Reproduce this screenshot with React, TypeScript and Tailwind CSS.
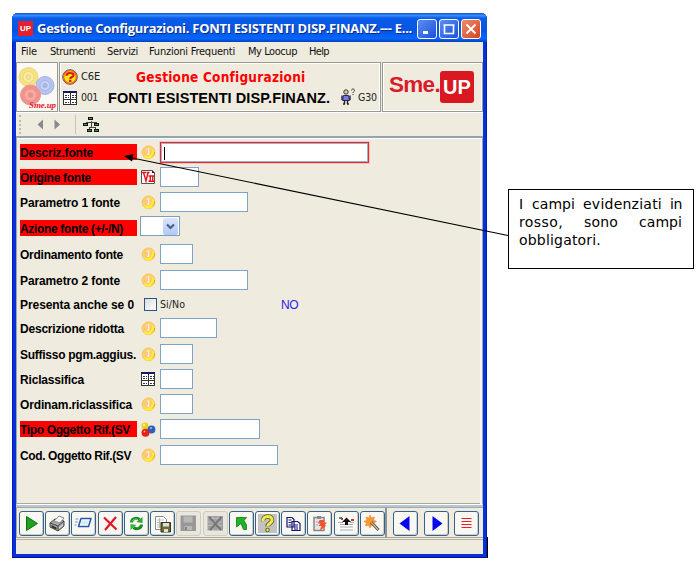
import { useLayoutEffect, useRef, useState, type ReactNode } from "react";

/* One line of text whose tracking is adjusted so that it spans `w` pixels. */
function Fit({ w, className = "", children }: { w: number; className?: string; children: string }) {
  const ref = useRef<HTMLSpanElement>(null);
  const [spacing, setSpacing] = useState(0);
  useLayoutEffect(() => {
    if (ref.current) {
      const natural = ref.current.getBoundingClientRect().width;
      setSpacing((w - natural) / children.length);
    }
  }, [w, children]);
  return (
    <span ref={ref} className={`inline-block shrink-0 whitespace-pre ${className}`} style={{ letterSpacing: spacing }}>
      {children}
    </span>
  );
}

const TAHOMA = "font-['DejaVu_Sans_Condensed','DejaVu_Sans',sans-serif]";
const ARIAL = "font-['Liberation_Sans',Arial,sans-serif]";

function ClockIcon() {
  return (
    <svg width="15" height="15" viewBox="0 0 15 15">
      <circle cx="7.5" cy="7.3" r="6.4" fill="#ffe04a" stroke="#f8b955" strokeWidth=".8" />
      <path d="M3 11.500A6 6 0 0 0 13.500 7L11 5 9 10z" fill="#fff02e" />
      <circle cx="6.500" cy="6.500" r="4.600" fill="#ffc877" />
      <path d="M5.700 4h2v5.200H6" fill="none" stroke="#fff8e0" strokeWidth="1.200" />
      <path d="M11 11.500A6 6 0 0 0 13.700 7" fill="none" stroke="#f39a3a" strokeWidth="1" />
    </svg>
  );
}

function TableIcon() {
  return (
    <svg width="14" height="14" viewBox="0 0 14 14" shapeRendering="crispEdges">
      <rect width="14" height="14" fill="#333" />
      <rect width="14" height="2" fill="#18185e" />
      <rect x="1" y="2" width="6" height="6" fill="#fff" />
      <rect x="8" y="2" width="5" height="6" fill="#fff" />
      <rect x="1" y="9" width="6" height="4" fill="#fff" />
      <rect x="8" y="9" width="5" height="4" fill="#fff" />
      <path d="M2 4.500h2M5 4.500h1M9 4.500h2M12 4.500h1M2 6.500h2M5 6.500h1M9 6.500h2M12 6.500h1M2 11.500h2M5 11.500h1M9 11.500h2M12 11.500h1" stroke="#333" />
    </svg>
  );
}

function VIcon() {
  return (
    <svg width="14" height="14" viewBox="0 0 14 14">
      <path d="M.5.5h10.500L13.500 3v10.500H.5z" fill="#fff" stroke="#555" />
      <path d="M11 0v3h3z" fill="#222" />
      <path d="M1 2.500h4M2.500 2.500l2.500 8.500 2-8.500M5.500 2.500h3M7.500 6h6M7.500 11.200h6M9.300 6v5M11.800 6v5" fill="none" stroke="#e3121b" strokeWidth="1.400" />
    </svg>
  );
}

function BallsIcon() {
  return (
    <svg width="15" height="15" viewBox="0 0 15 15">
      <circle cx="4" cy="4" r="3.500" fill="#e8d21e" />
      <circle cx="10.500" cy="7.500" r="3.900" fill="#2c5fc0" />
      <circle cx="4.500" cy="10.800" r="4" fill="#e02418" />
      <circle cx="3" cy="3" r="1" fill="#fff6a0" />
      <circle cx="10" cy="6" r="1" fill="#9dbcf0" />
      <circle cx="3.500" cy="9.500" r="1" fill="#ff9c8c" />
    </svg>
  );
}

function HelpIcon() {
  return (
    <svg width="16" height="16" viewBox="0 0 16 16">
      <circle cx="8" cy="8" r="7.300" fill="#ffe715" stroke="#2b2a6a" strokeWidth=".8" />
      <circle cx="8" cy="8" r="6.300" fill="none" stroke="#f0601c" strokeWidth="1.200" />
      <path d="M4.500 6.700C4.500 3.200 11.500 3.200 11.500 6.200 11.500 8.300 8.200 7.800 8.200 10" fill="none" stroke="#e3151b" strokeWidth="2.200" />
      <rect x="7" y="10.800" width="2.400" height="2.200" fill="#e3151b" />
    </svg>
  );
}

function PersonIcon() {
  return (
    <svg width="15" height="17" viewBox="0 0 15 17">
      <circle cx="5" cy="4" r="2.200" fill="#ded78b" stroke="#333" />
      <path d="M2.500 7.500h5l1 5h-7z" fill="#7779e8" stroke="#222a70" />
      <path d="M1 7.500v4.500M9 7.500v4.500M3.500 12v4M6.500 12v4M2 16h2M6 16h2" stroke="#222" strokeWidth="1.400" />
      <path d="M10.500 2.500c0-2 3-2 3 0 0 1-1.500 1-1.500 2.500M12 6v1" fill="none" stroke="#333" strokeWidth="1" />
    </svg>
  );
}

function Rings() {
  return (
    <svg width="40" height="48" viewBox="0 0 40 48">
      <rect width="40" height="48" fill="#fbf9f6" />
      <g fill="#f8e27c" stroke="#ead58a">
        <circle cx="11.500" cy="14" r="9.500" />
        <circle cx="11.500" cy="14" r="5.500" fill="#fbeca4" />
        <circle cx="11.500" cy="14" r="2.500" fill="#f4e294" />
      </g>
      <g fill="#b6c3f2" stroke="#a5b3e5">
        <circle cx="28" cy="22.500" r="9" />
        <circle cx="28" cy="22.500" r="5" fill="#cbd5f8" />
        <circle cx="28" cy="22.500" r="2.300" fill="#a9b8ea" />
      </g>
      <g fill="#f2938b" stroke="#e99790">
        <circle cx="13.500" cy="32" r="10" />
        <circle cx="13.500" cy="32" r="6" fill="#f6aca5" />
        <circle cx="13.500" cy="32" r="2.500" fill="#ea8f88" />
      </g>
    </svg>
  );
}

type Row = {
  label: string;
  tw: number;
  gap: string;
  red?: boolean;
  icon?: ReactNode;
  field: string;
};

const rows: Row[] = [
  { label: "Descriz.fonte", tw: 73, gap: "mt-0", red: true, field: "w-[209px] first" },
  { label: "Origine fonte", tw: 71, gap: "mt-[5px]", red: true, icon: <VIcon />, field: "w-[39px]" },
  { label: "Parametro 1 fonte", tw: 100, gap: "mt-[5px]", field: "w-[88px]" },
  { label: "Azione fonte (+/-/N)", tw: 103, gap: "mt-[6px]", red: true, field: "combo" },
  { label: "Ordinamento fonte", tw: 103, gap: "mt-[6px]", field: "w-[33px]" },
  { label: "Parametro 2 fonte", tw: 100, gap: "mt-[6px]", field: "w-[88px]" },
  { label: "Presenta anche se 0", tw: 114, gap: "mt-[4px]", field: "check" },
  { label: "Descrizione ridotta", tw: 104, gap: "mt-[4px]", field: "w-[57px]" },
  { label: "Suffisso pgm.aggius.", tw: 116, gap: "mt-[6px]", field: "w-[33px]" },
  { label: "Riclassifica", tw: 64, gap: "mt-[5px]", icon: <TableIcon />, field: "w-[33px]" },
  { label: "Ordinam.riclassifica", tw: 112, gap: "mt-[5px]", field: "w-[33px]" },
  { label: "Tipo Oggetto Rif.(SV", tw: 110, gap: "mt-[5px]", red: true, icon: <BallsIcon />, field: "w-[100px]" },
  { label: "Cod. Oggetto Rif.(SV", tw: 111, gap: "mt-[6px]", field: "w-[118px]" },
];

function Combo() {
  return (
    <div className="-mt-[2px] ml-[3px] flex h-[20px] w-[40px] items-center justify-end self-start border border-[#7f9db9] bg-white pr-px">
      <div className="flex h-[17px] w-[15px] items-center justify-center rounded-[2px] bg-linear-to-b from-[#dbe5fd] to-[#b1c8f5]">
        <svg width="9" height="7" viewBox="0 0 9 7">
          <path d="M1 1.500l3.500 3.500L8 1.500" fill="none" stroke="#4d6185" strokeWidth="2.200" />
        </svg>
      </div>
    </div>
  );
}

function FormRow({ row }: { row: Row }) {
  return (
    <div className={`flex h-[20px] items-center ${row.gap}`}>
      <div className={`flex h-[16px] w-[117px] items-center pt-px text-[12px] leading-[16px] font-bold text-black ${ARIAL} ${row.red ? "bg-[#ff0000]" : ""}`}>
        <Fit w={row.tw}>{row.label}</Fit>
      </div>
      {row.field === "combo" && <Combo />}
      {row.field === "check" && (
        <>
          <div className="ml-[7px] size-[13px] border border-[#28568c] bg-linear-to-br from-[#dcdcd7] to-white" />
          <Fit w={25} className={`ml-[3px] pt-px text-[10.500px] text-[#222] ${TAHOMA}`}>Si/No</Fit>
          <Fit w={17} className={`ml-[96px] pt-px text-[12px] text-[#2a22ee] ${ARIAL}`}>NO</Fit>
        </>
      )}
      {row.field.startsWith("w-") && (
        <>
          <div className="ml-[3px] flex w-[20px] items-center pl-px">{row.icon ?? <ClockIcon />}</div>
          {row.field.endsWith("first") ? (
            <div className="h-[21px] w-[209px] border border-[#e8262e] bg-white outline outline-[#f4a4a4]/50">
              <div className="h-full border border-[#9fb4c8] pt-[3px] pl-[2px]">
                <div className="h-[13px] w-px bg-black" />
              </div>
            </div>
          ) : (
            <div className={`h-[20px] border border-[#7fa3c4] bg-white ${row.field}`} />
          )}
        </>
      )}
    </div>
  );
}

function ToolButton({ children, disabled = false }: { children: ReactNode; disabled?: boolean }) {
  return (
    <div
      className={`flex h-[25px] w-[25px] shrink-0 items-center justify-center rounded-[3px] border ${
        disabled ? "border-[#cfccbe] bg-[#e9e7dd]" : "border-[#33628f] bg-[#f8f7f2] shadow-[inset_-1px_-1px_0_#cfccc2]"
      }`}
    >
      <svg width="19" height="19" viewBox="0 0 19 19">
        {children}
      </svg>
    </div>
  );
}

const tools: { off?: boolean; art: ReactNode }[] = [
  { art: <path d="M4.500 2.500L15.500 9.500 4.500 16.500z" fill="#20a020" stroke="#087508" /> },
  {
    art: (
      <>
        <path d="M2 9l5-4 9 2v5l-6 5-8-4z" fill="#aaa" stroke="#444" />
        <path d="M2 9l8 3 6-5M10 12v5" fill="none" stroke="#444" />
        <path d="M6 7l5-5 5 2-4 5z" fill="#f4f4f4" stroke="#888" />
        <path d="M3.500 11l5 2.500v2l-5-2z" fill="#333" />
        <path d="M11 14l4-3" stroke="#eee" />
      </>
    ),
  },
  {
    art: (
      <>
        <path d="M7 4.500h10l-2.500 8H4.500z" fill="#fff" stroke="#2459aa" strokeWidth="1.500" strokeLinejoin="round" />
        <path d="M8 6.500h7l-1.500 4h-7z" fill="#d9e8ff" />
        <path d="M1.500 5h3M1 8h3M.5 11h2" stroke="#5c9cdb" />
      </>
    ),
  },
  { art: <path d="M3 3.500l12.500 12M15 3L4 16" stroke="#df1825" strokeWidth="2.200" fill="none" /> },
  {
    art: (
      <>
        <path d="M4.500 8.500c0-4 5-5.500 8-3" fill="none" stroke="#178a22" strokeWidth="3" />
        <path d="M15.500 3v6l-6-1z" fill="#27a632" />
        <path d="M14.500 10.500c0 4-5 5.500-8 3" fill="none" stroke="#178a22" strokeWidth="3" />
        <path d="M3.500 16v-6l6 1z" fill="#35b53c" />
        <path d="M5 7.500C6 5 9 4.500 11 6" fill="none" stroke="#8be080" />
      </>
    ),
  },
  {
    art: (
      <>
        <path d="M2.500 2.500h8l3 3v10h-11z" fill="#fff" stroke="#8a8a8a" />
        <path d="M4 6h7M4 8.500h7M4 11h5M4 13h4M6.500 4v10" stroke="#b4bfb4" />
        <path d="M8 8.500h9.500V18H8z" fill="#6b6b2e" stroke="#34341a" />
        <path d="M10 9h6v3.500h-6zM11 15h4v3h-4z" fill="#ddd" />
      </>
    ),
  },
  {
    off: true,
    art: (
      <>
        <path d="M1.500 1.500h15.500v15.500H1.500z" fill="#989898" />
        <path d="M4.500 2.500h9v6h-9zM5.500 12h7.500v4H5.500z" fill="#b8b8b8" />
        <path d="M6 13h2v3H6z" fill="#858585" />
      </>
    ),
  },
  {
    off: true,
    art: (
      <>
        <path d="M1.500 2h15.500v14.500H1.500z" fill="#a0a0a0" />
        <path d="M2 4.500h14M2 8h14M2 11.500h14M7 2v14M12 2v14" stroke="#b9b9b9" />
        <path d="M3 3l12 13M15.500 3L4 16" stroke="#777" strokeWidth="2" />
      </>
    ),
  },
  { art: <path d="M4.500 13V3.500H14.500L12 6.500l2.500 4.500v4.500h-3L9 9.500z" fill="#22b322" stroke="#16701c" strokeWidth=".8" /> },
  {
    art: (
      <>
        <rect width="19" height="19" fill="#c2c2c2" />
        <path d="M5 7C4.500 1 15 1 14 6.500c-.5 3-4.500 3-4.500 6" fill="none" stroke="#5c5920" strokeWidth="4.500" />
        <path d="M5 7C4.500 1 15 1 14 6.500c-.5 3-4.500 3-4.500 6" fill="none" stroke="#f3e94d" strokeWidth="3" />
        <circle cx="9.500" cy="16" r="1.800" fill="#f3e94d" stroke="#5c5920" />
      </>
    ),
  },
  {
    art: (
      <>
        <path d="M3 3.500h5l2 2V13H3zM8 7.500h5.500l2.500 2v7H8z" fill="#fff" stroke="#11116e" strokeWidth="1.200" />
        <path d="M4.500 6h3M4.500 8.500h3M4.500 11h3M10 11h4M10 13h4M10 15h4" stroke="#11116e" />
      </>
    ),
  },
  {
    art: (
      <>
        <path d="M4 3.500h10v13H4z" fill="#e5e5e5" stroke="#888" strokeWidth="1.500" />
        <path d="M7 2h4v3H7z" fill="#888" />
        <path d="M9.500 6h5.500l-2 2.500h4l-2.500 3h2L9.500 17l2-5H8.500l2-2.500H8z" fill="#f5502d" />
        <path d="M6 8h2M6 11h2" stroke="#aaa" />
      </>
    ),
  },
  {
    art: (
      <>
        <path d="M1.500 3h15.500v14H1.500z" fill="#fff" />
        <path d="M1 8.500h5M13 8.500h4M3 10.500h5M11 10.500h5M3 13h13M3 16h13" stroke="#aaa" />
        <path d="M9.500 3.500L5 8h3v3h3V8h3z" fill="#111" />
        <path d="M2 3h3v2H2z" fill="#20a07a" />
        <path d="M14 5h3v2h-3zM4 4h2v2H4z" fill="#d42d2d" />
      </>
    ),
  },
  {
    art: (
      <>
        <path d="M7 1l1.500 3 3-1-1 3 3 1.500-3 1.500 1 3-3-1L7 14l-1.500-3-3 1 1-3L1 7.500 4 6 3 3l3 1z" fill="#ff9a28" stroke="#ed7324" strokeWidth=".5" />
        <path d="M8 8l7.500 8" stroke="#555" strokeWidth="3" />
        <path d="M8 8l7 7.500" stroke="#ccb78c" strokeWidth="1.300" />
      </>
    ),
  },
];

function HeaderPanel({ className, children }: { className: string; children: ReactNode }) {
  return (
    <div className={`h-[50px] shrink-0 border border-[#9b9a92] shadow-[inset_1px_1px_0_#fff,inset_-1px_-1px_0_#fff] ${className}`}>{children}</div>
  );
}

function TitleButton({ close = false, children }: { close?: boolean; children: ReactNode }) {
  return (
    <div
      className={`flex size-[20px] shrink-0 items-center justify-center rounded-[3px] border border-white ${
        close ? "bg-linear-to-br from-[#ee8a6a] to-[#d5401a]" : "bg-linear-to-br from-[#5c8df0] to-[#1f50d8]"
      }`}
    >
      <svg width="14" height="14" viewBox="0 0 14 14" fill="none" stroke="#fff">
        {children}
      </svg>
    </div>
  );
}

const menus: [string, number, string][] = [
  ["File", 16, "ml-[5px]"],
  ["Strumenti", 45, "ml-[13px]"],
  ["Servizi", 31, "ml-[12px]"],
  ["Funzioni Frequenti", 86, "ml-[11px]"],
  ["My Loocup", 49, "ml-[13px]"],
  ["Help", 20, "ml-[12px]"],
];

function AppWindow() {
  return (
    <div className="flex h-[545px] w-[475px] flex-col rounded-t-[6px] bg-[#0831d9] px-[4px] pb-[4px] shadow-[inset_1px_0_0_#0019cf,inset_-1px_0_0_#001eb0,inset_0_-1px_0_#00138c]">
      <div className="-mx-[4px] flex h-[29px] shrink-0 items-center rounded-t-[6px] bg-[linear-gradient(#0a4fd8_0%,#3a8ffb_8%,#0b5ce8_18%,#0355e3_60%,#0666fc_88%,#0340c0_100%)] pt-[2px] pr-[6px] pl-[6px]">
        <div className={`flex h-[15px] w-[15px] items-center justify-center bg-[#e3202c] text-[8px] leading-none font-bold text-white ${ARIAL}`}>UP</div>
        <Fit w={375} className="mr-auto ml-[4px] font-['Open_Sans','Noto_Sans',sans-serif] text-[13px] font-bold text-white [text-shadow:1px_1px_0_#0b2a84]">
          Gestione Configurazioni. FONTI ESISTENTI DISP.FINANZ.--- E...
        </Fit>
        <div className="flex gap-[2px]">
          <TitleButton><path d="M3 10.500h5" strokeWidth="3" /></TitleButton>
          <TitleButton><path d="M2.500 3v8.500h9V3M1.500 3h11" strokeWidth="1.600" /></TitleButton>
          <TitleButton close><path d="M2.500 2.500l9 9M11.500 2.500l-9 9" strokeWidth="2" /></TitleButton>
        </div>
      </div>

      <div className="flex min-h-0 flex-1 flex-col bg-[#efebde]">
        <div className={`flex h-[19px] shrink-0 items-center text-[11px] leading-[18px] text-[#111] ${TAHOMA}`}>
          {menus.map(([name, w, gap]) => (
            <Fit key={name} w={w} className={gap}>{name}</Fit>
          ))}
        </div>

        <div className="flex h-[51px] shrink-0 gap-px pt-px">
          <HeaderPanel className="w-[42px]">
            <div className="relative">
              <Rings />
              <span className="absolute top-[31px] left-[12px] leading-none">
                <Fit w={27} className="font-['Liberation_Serif',serif] text-[9px] leading-[11px] font-bold text-[#e8202a] italic">Sme.up</Fit>
              </span>
            </div>
          </HeaderPanel>
          <HeaderPanel className="flex w-[322px] flex-col pt-[4px] pl-[2px]">
            <div className="flex h-[20px] items-center">
              <HelpIcon />
              <Fit w={19} className={`ml-[3px] text-[11px] text-[#222] ${TAHOMA}`}>C6E</Fit>
              <Fit w={169} className={`ml-[36px] text-[13.500px] leading-[18px] font-bold text-[#ff0000] ${TAHOMA}`}>Gestione Configurazioni</Fit>
            </div>
            <div className="flex h-[22px] items-center">
              <div className="ml-px"><TableIcon /></div>
              <Fit w={17} className={`ml-[4px] text-[10.500px] text-[#222] ${TAHOMA}`}>001</Fit>
              <Fit w={222} className={`ml-[10px] text-[14.500px] leading-[20px] font-bold text-black ${ARIAL}`}>FONTI ESISTENTI DISP.FINANZ.</Fit>
              <div className="-mt-[4px] ml-[11px]"><PersonIcon /></div>
              <Fit w={19} className={`ml-[2px] text-[10.500px] text-[#222] ${TAHOMA}`}>G30</Fit>
            </div>
          </HeaderPanel>
          <HeaderPanel className="flex w-[101px] pt-[8px] pl-[6px]">
            <Fit w={51} className={`text-[22.500px] leading-[28px] font-bold text-[#d91c2a] ${ARIAL}`}>Sme.</Fit>
            <div className="flex h-[32px] w-[34px] items-center justify-center rounded-[3px] bg-[#d91822]">
              <Fit w={28} className={`text-[20px] leading-[24px] font-bold text-white ${ARIAL}`}>UP</Fit>
            </div>
          </HeaderPanel>
        </div>

        <div className="flex h-[24px] shrink-0 items-center border-t border-white">
          <div className="ml-[3px] h-[19px] border-l-2 border-dotted border-[#bcb9ad]" />
          <svg className="ml-[16px]" width="24" height="11" viewBox="0 0 24 11" fill="#858b8b">
            <path d="M6 .5v10L.5 5.500zM17.500.500v10L23 5.500z" />
          </svg>
          <div className="ml-[14px] h-[19px] w-px bg-[#c9c5b5]" />
          <svg className="ml-[7px]" width="17" height="16" viewBox="0 0 17 16" shapeRendering="crispEdges">
            <path d="M8.500 4v3M3.500 8V5.500h10V8M8.500 5v6M6 12v-1.500h6V12" fill="none" stroke="#444" />
            <g fill="#35a33a" stroke="#111">
              <rect x="5.500" y=".5" width="4" height="2" />
              <rect x=".5" y="6.500" width="4" height="2" />
              <rect x="11.500" y="6.500" width="4" height="2" />
              <rect x="4.500" y="12.500" width="4" height="2" />
              <rect x="11.500" y="12.500" width="4" height="2" />
            </g>
          </svg>
        </div>

        <div className="flex h-[369px] shrink-0 flex-col border border-t-2 border-[#9ba8ae] border-t-[#91a4b1] border-b-white pt-[4px] pl-[3px] shadow-[inset_0_1px_0_#fff,inset_-2px_0_0_#f8f6ed,inset_0_-1px_0_#aaa99f]">
          {rows.map((row) => (
            <FormRow key={row.label} row={row} />
          ))}
        </div>

        <div className="flex h-[33px] shrink-0 border-t-2 border-[#b3c8de]">
          <div className="flex w-[371px] items-center gap-[1.230px] border border-[#aaa79b] border-r-2 border-r-[#8f9398] pt-px pl-[2px]">
            {tools.map((t, i) => (
              <ToolButton key={i} disabled={t.off}>{t.art}</ToolButton>
            ))}
          </div>
          <div className="flex flex-1 items-center gap-[5.500px] border-y border-[#aaa79b] pt-px pl-[6px]">
            <ToolButton><path d="M13.500 2v15L3.500 9.500z" fill="#0505ef" /></ToolButton>
            <ToolButton><path d="M5.500 2v15l10-7.500z" fill="#0505ef" /></ToolButton>
            <ToolButton><path d="M4.500 4.500h10M4.500 7.500h10M4.500 10.500h10M4.500 13.500h10" stroke="#ee1c24" strokeWidth="1.200" /></ToolButton>
          </div>
        </div>
        <div className="mt-px flex-1 border-t border-[#b5b2a6]" />
      </div>
    </div>
  );
}

export default function App() {
  return (
    <main className="relative flex h-[565px] w-[699px] items-start overflow-hidden bg-white pt-[13px] pl-[12px]">
      <AppWindow />
      <div className="mt-[524px] h-[21px] w-px bg-black" />
      <aside className="mt-[176px] ml-[20px] h-[80px] w-[186px] border border-black pt-[5px] pl-[10px] font-['DejaVu_Sans',Verdana,sans-serif] text-[14px] leading-[18px] text-black">
        <p className="flex w-[163px] justify-between">
          <Fit w={5}>I</Fit><Fit w={43}>campi</Fit><Fit w={79}>evidenziati</Fit><Fit w={12}>in</Fit>
        </p>
        <p className="flex w-[163px] justify-between">
          <Fit w={44}>rosso,</Fit><Fit w={34}>sono</Fit><Fit w={43}>campi</Fit>
        </p>
        <p><Fit w={82}>obbligatori.</Fit></p>
      </aside>
      <svg className="pointer-events-none absolute inset-0" width="699" height="565" viewBox="0 0 699 565">
        <path d="M130 157.500L508 235.500" stroke="#000" strokeWidth="1.100" />
        <path d="M124 156l9.500-2-1.500 7.500z" fill="#000" />
      </svg>
    </main>
  );
}
